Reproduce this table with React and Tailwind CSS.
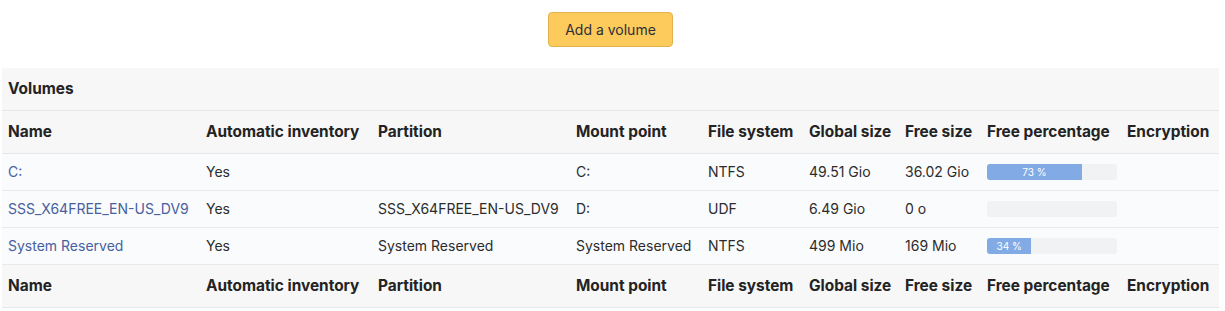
const columns = [
  "Name",
  "Automatic inventory",
  "Partition",
  "Mount point",
  "File system",
  "Global size",
  "Free size",
  "Free percentage",
  "Encryption",
];

const widths = ["w-[198px]", "w-[172px]", "w-[198px]", "w-[132px]", "w-[101px]", "w-[96px]", "w-[82px]", "w-[140px]", "w-[98px]"];

const volumes = [
  { name: "C:", auto: "Yes", partition: "", mount: "C:", fs: "NTFS", global: "49.51 Gio", free: "36.02 Gio", pct: 73 },
  { name: "SSS_X64FREE_EN-US_DV9", auto: "Yes", partition: "SSS_X64FREE_EN-US_DV9", mount: "D:", fs: "UDF", global: "6.49 Gio", free: "0 o", pct: 0 },
  { name: "System Reserved", auto: "Yes", partition: "System Reserved", mount: "System Reserved", fs: "NTFS", global: "499 Mio", free: "169 Mio", pct: 34 },
];

function HeaderRow() {
  return (
    <tr className="bg-[#f7f7f7] border-b border-[#e7e7e7] h-[43px]">
      {columns.map((c) => (
        <th key={c} className="text-left font-bold text-[15.4px] px-[6px] text-[#232323] whitespace-nowrap">
          {c}
        </th>
      ))}
    </tr>
  );
}

function Progress({ pct }) {
  return (
    <div className="w-[130px] h-[16px] rounded-[3px] bg-[#f1f2f4] overflow-hidden flex">
      {pct > 0 && (
        <div
          className="h-full bg-[#82abe5] text-white text-[10px] leading-[16px] text-center"
          style={{ width: `${pct}%` }}
        >
          {pct} %
        </div>
      )}
    </div>
  );
}

export default function App() {
  return (
    <div className="w-[1225px] h-[311px] bg-white text-[14px] text-[#2c2c2c]" style={{ fontFamily: "Inter, 'Noto Sans', sans-serif" }}>
      <div className="flex justify-center pt-[12px] pb-[21px] pr-[4px]">
        <button className="h-[35px] px-[16px] rounded-[4px] bg-[#fdca5c] border border-[#e2b24e] text-[#2d2f38] text-[14px]">
          Add a volume
        </button>
      </div>
      <div className="px-[2px]">
        <table className="w-[1217px] table-fixed border-collapse">
          <colgroup>
            {widths.map((w, i) => (
              <col key={i} className={w} />
            ))}
          </colgroup>
          <thead>
            <tr className="bg-[#f7f7f7] border-b border-[#e7e7e7] h-[42px]">
              <th colSpan={9} className="text-left font-bold text-[15.4px] px-[6px] text-[#232323]">
                Volumes
              </th>
            </tr>
            <HeaderRow />
          </thead>
          <tbody>
            {volumes.map((v) => (
              <tr key={v.name} className="bg-[#fafbfc] border-b border-[#e9e9e9] h-[37px]">
                <td className="px-[6px] whitespace-nowrap">
                  <a href="#" className="text-[#4760a0]">{v.name}</a>
                </td>
                <td className="px-[6px] whitespace-nowrap">{v.auto}</td>
                <td className="px-[6px] whitespace-nowrap">{v.partition}</td>
                <td className="px-[6px] whitespace-nowrap">{v.mount}</td>
                <td className="px-[6px] whitespace-nowrap">{v.fs}</td>
                <td className="px-[6px] whitespace-nowrap">{v.global}</td>
                <td className="px-[6px] whitespace-nowrap">{v.free}</td>
                <td className="px-[6px]">
                  <Progress pct={v.pct} />
                </td>
                <td className="px-[6px]"></td>
              </tr>
            ))}
          </tbody>
          <tfoot>
            <HeaderRow />
          </tfoot>
        </table>
      </div>
    </div>
  );
}
